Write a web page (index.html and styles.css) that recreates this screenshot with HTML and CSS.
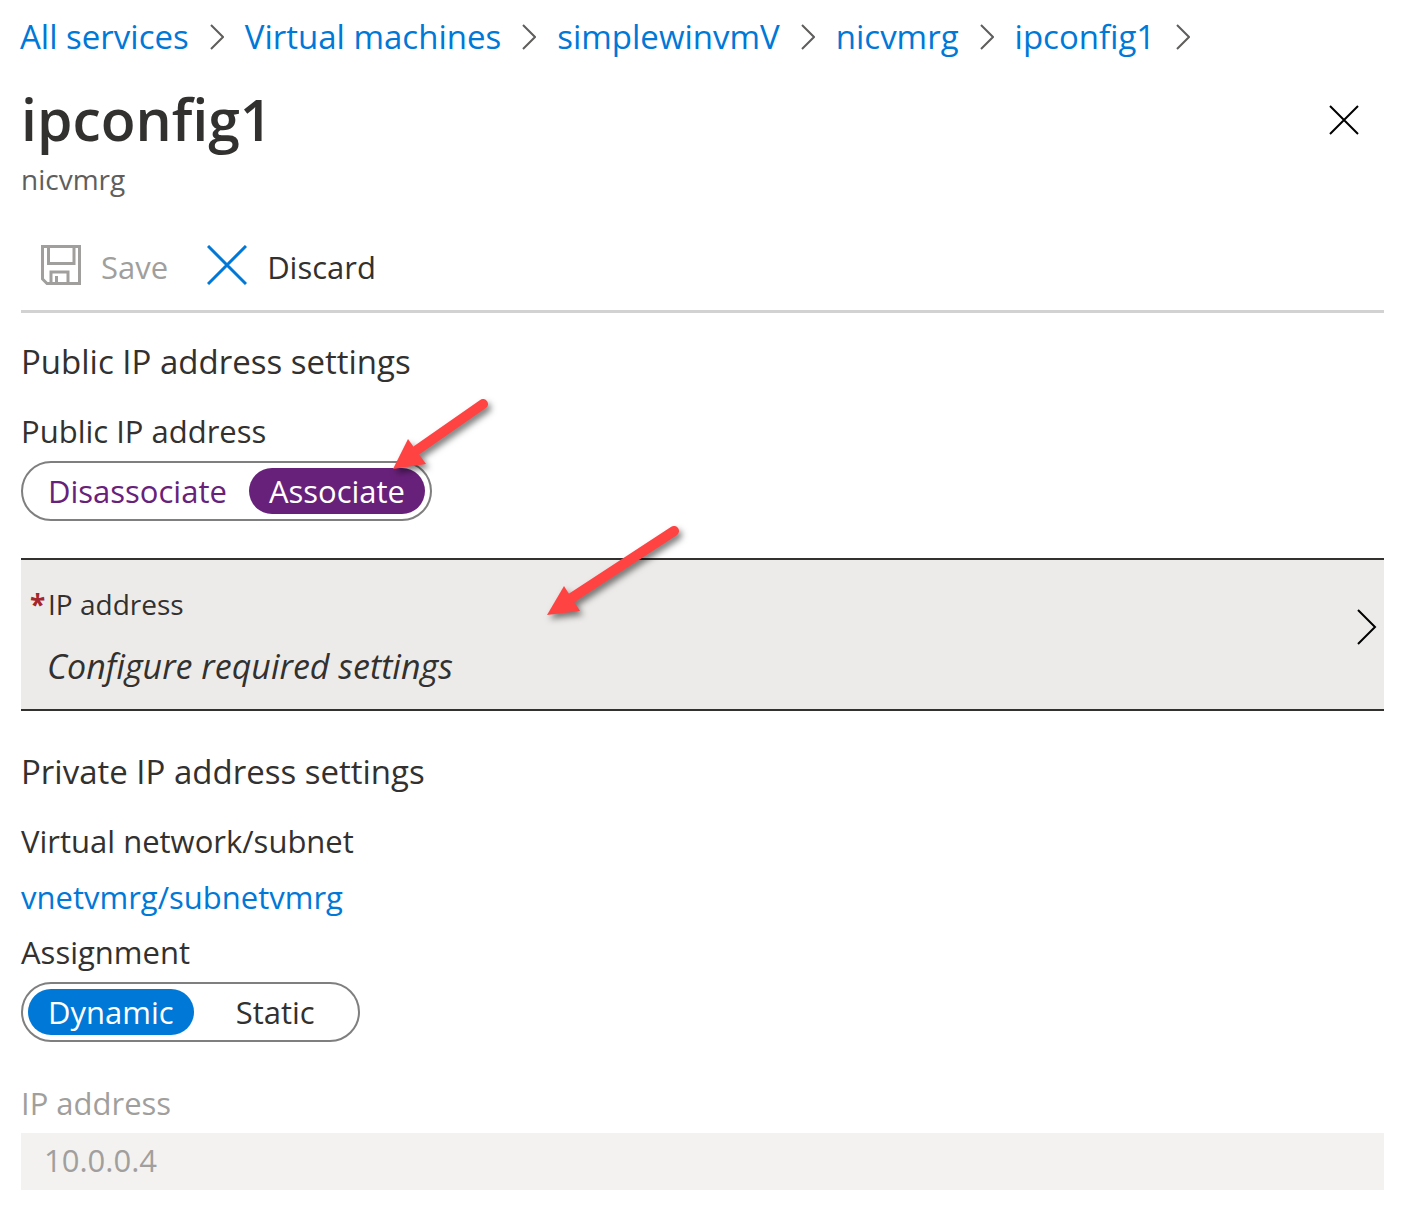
FILE: index.html
```html
<!DOCTYPE html>
<html lang="en">
<head>
  <meta charset="utf-8">
  <meta name="viewport" content="width=device-width, initial-scale=1">
  <title>ipconfig1</title>
  <link rel="stylesheet" href="styles.css">
</head>
<body>
  <nav class="breadcrumb" aria-label="Breadcrumb">
    <a href="#">All services</a>
    <svg class="crumb-sep" viewBox="0 0 14 26" aria-hidden="true"><path d="M1 1L13 13L1 25"/></svg>
    <a href="#">Virtual machines</a>
    <svg class="crumb-sep" viewBox="0 0 14 26" aria-hidden="true"><path d="M1 1L13 13L1 25"/></svg>
    <a href="#">simplewinvmV</a>
    <svg class="crumb-sep" viewBox="0 0 14 26" aria-hidden="true"><path d="M1 1L13 13L1 25"/></svg>
    <a href="#">nicvmrg</a>
    <svg class="crumb-sep" viewBox="0 0 14 26" aria-hidden="true"><path d="M1 1L13 13L1 25"/></svg>
    <a href="#">ipconfig1</a>
    <svg class="crumb-sep" viewBox="0 0 14 26" aria-hidden="true"><path d="M1 1L13 13L1 25"/></svg>
  </nav>

  <main class="blade">
    <header class="blade-header">
      <div>
        <h1 class="title">ipconfig1</h1>
        <p class="subtitle">nicvmrg</p>
      </div>
      <button class="close" type="button" aria-label="Close">
        <svg viewBox="0 0 32 32" aria-hidden="true"><path d="M2 2L30 30M30 2L2 30"/></svg>
      </button>
    </header>

    <div class="toolbar">
      <button class="command" type="button" disabled>
        <svg class="icon-save" viewBox="0 0 40 40" aria-hidden="true"><path d="M1.5 1.5H38.5V38.5H6L1.5 34Z M7.5 1.5V18.5H33V1.5 M10 38.5V27H27V38.5 M15.5 38.5V31"/></svg>
        Save
      </button>
      <button class="command" type="button">
        <svg class="icon-discard" viewBox="0 0 40 40" aria-hidden="true"><path d="M1 1L39 39M39 1L1 39"/></svg>
        Discard
      </button>
    </div>

    <section class="settings">
      <h2 class="heading">Public IP address settings</h2>
      <fieldset class="field">
        <legend class="label">Public IP address</legend>
        <div class="toggle toggle-edited">
          <label class="option"><input type="radio" name="public-ip">Disassociate</label>
          <label class="option"><input type="radio" name="public-ip" checked>Associate</label>
        </div>
      </fieldset>
      <button class="selector" type="button">
        <span class="selector-text">
          <span class="selector-label"><span class="required">*</span>IP address</span>
          <span class="selector-value">Configure required settings</span>
        </span>
        <svg class="selector-chevron" viewBox="0 0 20 36" aria-hidden="true"><path d="M1 1L18 18L1 35"/></svg>
      </button>
    </section>

    <section class="settings">
      <h2 class="heading">Private IP address settings</h2>
      <p class="label">Virtual network/subnet</p>
      <a class="subnet" href="#">vnetvmrg/subnetvmrg</a>
      <fieldset class="field">
        <legend class="label">Assignment</legend>
        <div class="toggle">
          <label class="option"><input type="radio" name="assignment" checked>Dynamic</label>
          <label class="option"><input type="radio" name="assignment">Static</label>
        </div>
      </fieldset>
      <div class="address">
        <label class="label" for="private-ip">IP address</label>
        <input class="textbox" id="private-ip" type="text" value="10.0.0.4" disabled>
      </div>
    </section>
  </main>

  <svg class="arrow arrow-associate" viewBox="0 0 110 84" aria-hidden="true">
    <path class="shaft" d="M93 14L27 60"/><path class="head" d="M3 79L18 49L36 74Z"/>
  </svg>
  <svg class="arrow arrow-address" viewBox="0 0 150 104" aria-hidden="true">
    <path class="shaft" d="M130 11L26 79"/><path class="head" d="M3 95L20 66L36 91Z"/>
  </svg>
</body>
</html>
```

FILE: styles.css
```css
* {
  box-sizing: border-box;
}

body {
  position: relative;
  margin: 0;
  background: #fff;
  color: #323130;
  font-family: "Open Sans", "Noto Sans", sans-serif;
  font-size: 31px;
  line-height: 40px;
}

h1, h2, p {
  margin: 0;
  font-weight: 400;
}

button, input {
  font: inherit;
  color: inherit;
}

button {
  border: 0;
  padding: 0;
  background: none;
}

svg {
  display: block;
  flex: none;
  fill: none;
}

a {
  color: #0078d7;
  text-decoration: none;
}

.breadcrumb {
  display: flex;
  align-items: center;
  gap: 21px;
  padding: 15px 20px 0;
  font-size: 33px;
  line-height: 44px;
}

.crumb-sep {
  width: 14px;
  height: 26px;
  stroke: #605e5c;
  stroke-width: 2;
}

.blade {
  padding: 20px 18px 26px 21px;
}

.blade-header {
  display: flex;
  justify-content: space-between;
  align-items: flex-start;
}

.title {
  font-size: 57px;
  font-weight: 600;
  line-height: 80px;
}

.subtitle {
  color: #605e5c;
  font-size: 28px;
}

.close {
  margin: 25px 24px 0 0;
}

.close svg {
  width: 32px;
  height: 32px;
  stroke: #000;
  stroke-width: 2;
}

.toolbar {
  display: flex;
  gap: 39px;
  padding: 40px 20px 20px;
  border-bottom: 3px solid #d2d2d2;
}

.command {
  display: flex;
  align-items: center;
  gap: 20px;
  height: 51px;
  padding-top: 5px;
}

.command:disabled {
  color: #a19f9d;
}

.command svg {
  width: 40px;
  height: 40px;
  margin-bottom: 4px;
}

.icon-save {
  stroke: #a19f9d;
  stroke-width: 3;
}

.icon-discard {
  stroke: #0078d7;
  stroke-width: 3;
}

.settings {
  padding-top: 27px;
}

.settings + .settings {
  padding-top: 39px;
}

.heading {
  margin-bottom: 27px;
  font-size: 33px;
  line-height: 44px;
}

.field {
  min-width: 0;
  margin: 0;
  border: 0;
  padding: 0;
}

.label {
  display: block;
  padding: 0;
}

.toggle {
  display: inline-flex;
  margin-top: 10px;
  height: 60px;
  padding: 5px;
  border: 2px solid #7f7f7f;
  border-radius: 30px;
  vertical-align: top;
}

.option {
  display: flex;
  align-items: center;
  padding: 0 20px;
  border-radius: 23px;
}

.option + .option {
  margin-left: 2px;
}

.toggle:not(.toggle-edited) .option + .option {
  padding: 0 38px 0 40px;
}

.option input {
  appearance: none;
  width: 0;
  height: 0;
  margin: 0;
}

.option:has(input:checked) {
  background: #0078d7;
  color: #fff;
}

.toggle-edited {
  color: #68217a;
}

.toggle-edited .option:has(input:checked) {
  background: #68217a;
}

.selector {
  display: flex;
  align-items: center;
  justify-content: space-between;
  width: 100%;
  margin-top: 37px;
  padding: 24px 7px 21px 9px;
  border: solid #323130;
  border-width: 2px 0;
  background: #edebe9;
  text-align: left;
}

.selector-text {
  display: grid;
  gap: 20px;
}

.selector-label {
  font-size: 28px;
}

.required {
  display: inline-block;
  width: 18px;
  color: #a4262c;
  font-weight: 700;
}

.selector-value {
  padding-left: 17px;
  font-size: 34px;
  line-height: 44px;
  font-style: italic;
}

.selector-chevron {
  width: 20px;
  height: 36px;
  margin-bottom: 18px;
  stroke: #000;
  stroke-width: 2;
}

.subnet {
  display: block;
  margin: 16px 0 15px;
}

.address {
  margin-top: 41px;
  color: #a19f9d;
}

.textbox {
  display: block;
  width: 100%;
  height: 57px;
  margin-top: 10px;
  border: 0;
  padding: 0 23px 4px;
  background: #f3f2f1;
}

/* Callout arrows drawn over the form */
.arrow {
  position: absolute;
  filter: drop-shadow(3px 4px 3px rgba(0, 0, 0, 0.5));
  pointer-events: none;
}

.arrow-associate {
  top: 390px;
  left: 390px;
  width: 110px;
  height: 84px;
}

.arrow-address {
  top: 520px;
  left: 544px;
  width: 150px;
  height: 104px;
}

.shaft {
  stroke: #ff4343;
  stroke-width: 10;
  stroke-linecap: round;
}

.head {
  fill: #ff4343;
}
```
